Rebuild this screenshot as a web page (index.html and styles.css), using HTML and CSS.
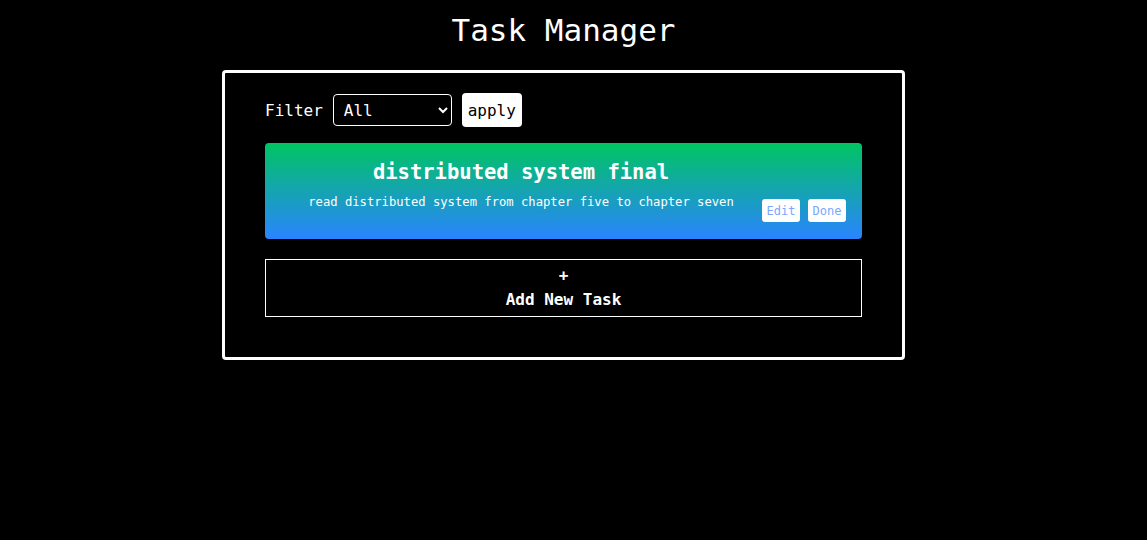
FILE: index.html
```html
<!DOCTYPE html>
<html>
<head>
<meta charset="utf-8">
<link rel="stylesheet" href="styles.css">
<title>Task Manager</title>
</head>
<body>
<div class="page">
  <h1 class="title">Task Manager</h1>
  <div class="panel">
    <div class="filter-row">
      <label class="filter-label" for="f">Filter</label>
      <select id="f" class="filter-select">
        <option>All</option>
        <option>Done</option>
        <option>Pending</option>
      </select>
      <button class="apply-btn">apply</button>
    </div>
    <div class="task-card">
      <div class="task-text">
        <div class="task-title">distributed system final</div>
        <div class="task-desc">read distributed system from chapter five to chapter seven</div>
      </div>
      <div class="task-actions">
        <button class="small-btn">Edit</button>
        <button class="small-btn">Done</button>
      </div>
    </div>
    <div class="add-task">
      <div class="add-plus">+</div>
      <div class="add-label">Add New Task</div>
    </div>
  </div>
</div>
</body>
</html>
```

FILE: styles.css
```css
html, body {
  margin: 0;
  padding: 0;
  background: #000;
  color: #fff;
  font-family: "DejaVu Sans Mono", "Liberation Mono", monospace;
}
.page {
  width: 1127px;
  display: flex;
  flex-direction: column;
  align-items: center;
}
.title {
  font-size: 31px;
  font-weight: normal;
  margin: 11px 0 0 0;
  line-height: 38px;
  height: 59px;
}
.panel {
  width: 597px;
  border: 3px solid #fff;
  border-radius: 4px;
  padding: 20px 40px 40px 40px;
  display: flex;
  flex-direction: column;
}
.filter-row {
  display: flex;
  align-items: center;
  height: 34px;
}
.filter-label {
  font-size: 16px;
  margin-right: 10px;
}
.filter-select {
  width: 119px;
  height: 32px;
  background: #000;
  color: #fff;
  border: 1px solid #fff;
  border-radius: 4px;
  font-family: inherit;
  font-size: 16px;
  padding: 0 6px;
  margin-right: 10px;
}
.apply-btn {
  height: 34px;
  width: 60px;
  background: #fff;
  color: #000;
  border: none;
  border-radius: 4px;
  font-family: inherit;
  font-size: 16px;
  padding: 0;
}
.task-card {
  margin-top: 16px;
  height: 96px;
  border-radius: 4px;
  background: linear-gradient(to bottom, #00c462, #2a84ff);
  display: flex;
  padding: 0 16px;
}
.task-text {
  width: 480px;
  display: flex;
  flex-direction: column;
  align-items: center;
}
.task-title {
  font-size: 20.5px;
  font-weight: bold;
  margin-top: 16px;
  line-height: 26px;
}
.task-desc {
  font-size: 12.2px;
  margin-top: 9px;
  line-height: 16px;
}
.task-actions {
  display: flex;
  gap: 8px;
  margin-top: 56px;
  margin-left: 1px;
}
.small-btn {
  width: 38px;
  height: 23px;
  background: #fff;
  color: #7aa7ff;
  border: none;
  border-radius: 3px;
  font-family: inherit;
  font-size: 12px;
  padding: 0;
}
.add-task {
  margin-top: 20px;
  height: 56px;
  border: 1px solid #fff;
  display: flex;
  flex-direction: column;
  align-items: center;
  font-weight: bold;
  font-size: 16px;
}
.add-plus {
  margin-top: 6px;
  line-height: 20px;
}
.add-label {
  margin-top: 2px;
  line-height: 24px;
}
```
